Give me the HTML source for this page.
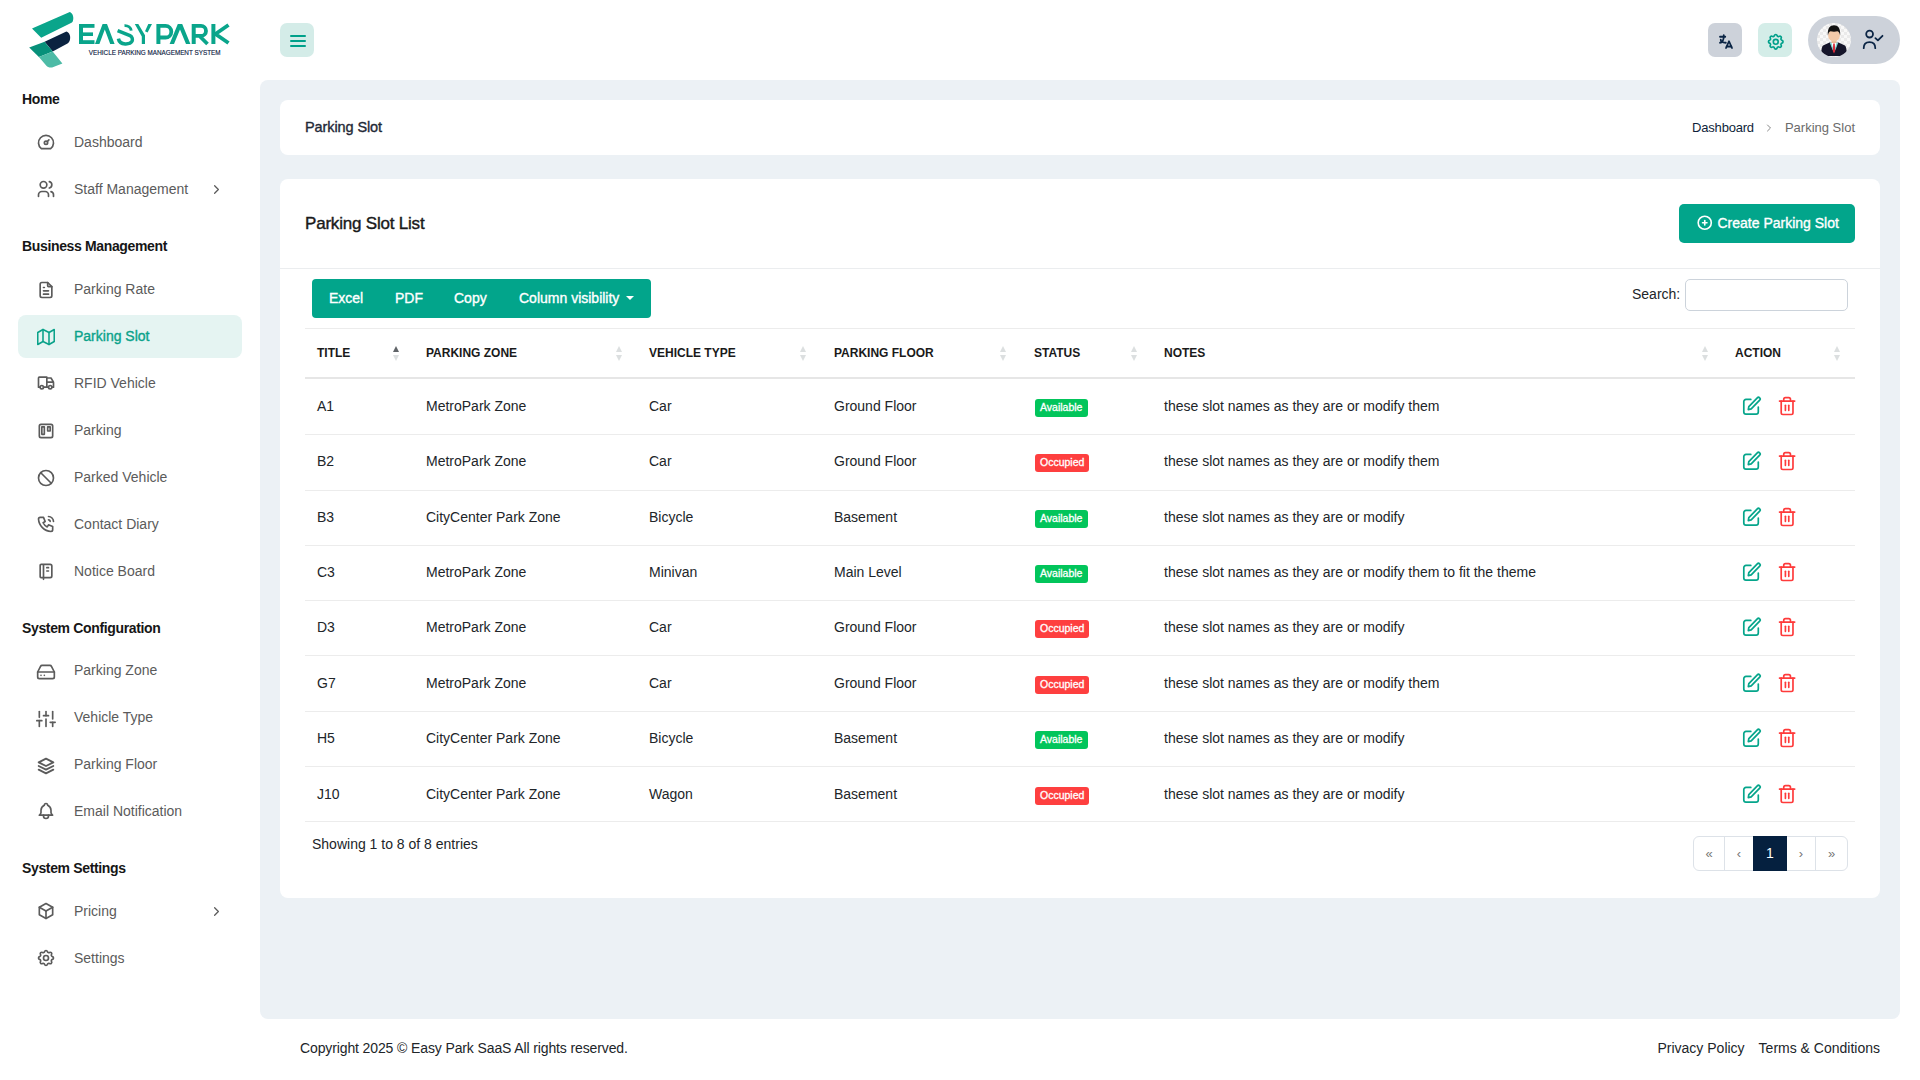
<!DOCTYPE html>
<html>
<head>
<meta charset="utf-8">
<style>
*{box-sizing:border-box;margin:0;padding:0}
html,body{width:1920px;height:1080px;overflow:hidden;background:#fff;font-family:"Liberation Sans",sans-serif;color:#212529}
.abs{position:absolute}
.sb-h{position:absolute;left:22px;font-size:14px;font-weight:bold;color:#161616;line-height:16px;letter-spacing:-0.35px}
.sb-i{position:absolute;left:18px;width:224px;height:42px;border-radius:8px;color:#5b5b5b;font-size:14px}
.sb-i .ic{position:absolute;left:18px;top:11px;width:20px;height:20px}
.sb-i .tx{position:absolute;left:56px;top:0;line-height:42px;white-space:nowrap}
.sb-i .chev{position:absolute;left:191px;top:14px;width:15px;height:15px}
.sb-i.act{background:#e5f4f2;color:#0aa28a;height:43px}
.sb-i.act .tx{-webkit-text-stroke:0.35px #0aa28a}
.main-bg{position:absolute;left:260px;top:80px;width:1640px;height:938.5px;background:#ecf1f5;border-radius:8px}
.card{position:absolute;background:#fff;border-radius:8px}
.t-bc{position:absolute;left:305px;top:117px;font-size:14.5px;line-height:20px;color:#1f2937;-webkit-text-stroke:0.35px #1f2937;letter-spacing:-0.1px}
.bc{position:absolute;right:65px;top:118px;height:20px;font-size:13px;line-height:20px;white-space:nowrap;display:flex;align-items:center}
.bc1{color:#0f1f3a;letter-spacing:-0.2px}
.bcc{margin:0 10px 0 9px}
.bc2{color:#6b6b6b}
.t-list{position:absolute;left:305px;top:213px;font-size:17px;line-height:22px;color:#1a1a1a;-webkit-text-stroke:0.4px #1a1a1a;letter-spacing:-0.2px}
.btn-create{position:absolute;left:1679px;top:204px;width:176px;height:39px;border-radius:5px;background:#02a58b;color:#fff;font-size:14px;-webkit-text-stroke:0.35px #fff;display:flex;align-items:center;padding-left:18px;white-space:nowrap}
.btn-create svg{margin-right:4px;margin-left:-1px;margin-top:-1px}
.btn-create span{margin-top:-2px}
.tools{position:absolute;left:312px;top:279px;width:339px;height:39px;border-radius:4px;background:#02a58b;color:#fff;font-size:14px;-webkit-text-stroke:0.35px #fff}
.tools span{position:absolute;top:0;line-height:38.5px;white-space:nowrap}
.tools .caret{position:absolute;left:314px;top:17px;width:0;height:0;border-left:4px solid transparent;border-right:4px solid transparent;border-top:4px solid #fff}
.search-l{position:absolute;left:1632px;top:284px;font-size:14px;line-height:20px;color:#212529}
.search-i{position:absolute;left:1685px;top:279px;width:163px;height:32px;border:1px solid #ccd3db;border-radius:5px;background:#fff}
.th{position:absolute;top:343px;font-size:12px;line-height:20px;font-weight:bold;color:#1a1a1a;white-space:nowrap}
.srt{position:absolute;top:345px;width:7px;height:16px;margin-left:0.5px}
.srt i{position:absolute;left:0;width:0;height:0;border-left:3px solid transparent;border-right:3px solid transparent}
.srt .up{top:1px;border-bottom:6px solid #dcdfe0}
.srt .dn{top:10px;border-top:6px solid #dcdfe0}
.srt.a .up{border-bottom-color:#606468}
.tr-row{position:absolute;left:0;width:1920px;height:22px;margin-top:-1px}
.td{position:absolute;top:0;line-height:22px;font-size:14px;color:#212529;white-space:nowrap}
.bdg{position:absolute;top:4px;height:18px;line-height:16.5px;border-radius:3px;color:#fff;font-size:10.5px;-webkit-text-stroke:0.3px #fff;padding:0 5px;white-space:nowrap}
.bdg.av{background:#02c55b;width:53px}
.bdg.oc{background:#fe3f3f;width:54px}
.ed{position:absolute;left:1742px;top:1.3px}
.tr{position:absolute;left:1776.8px;top:1px}
.showing{position:absolute;left:312px;top:834px;font-size:14px;line-height:20px;color:#212529}
.pag{position:absolute;left:1693px;top:836px;width:155px;height:35px;border:1px solid #dde2e8;border-radius:6px}
.pg{position:absolute;top:0;height:33px;line-height:33px;text-align:center;font-size:13px;color:#777}
.pg.act{background:#05203f;color:#fff;font-size:14px;top:-1px;height:35px;line-height:34px}
.foot-l{position:absolute;left:300px;top:1038px;font-size:14px;line-height:20px;color:#212529;letter-spacing:-0.12px}
.foot-r{position:absolute;right:40px;top:1038px;font-size:14px;line-height:20px;color:#212529;white-space:nowrap}

</style>
</head>
<body>
<svg class="abs" style="left:0;top:0" width="260" height="80" viewBox="0 0 260 80">
<path d="M32 28.5 L69.8 11.9 C72.5 13 73.8 16.5 73.2 19.5 C72.9 21.5 72.5 22.3 71.5 22.8 L41.2 37.7 Z" fill="#0aa58b"/>
<path d="M44.6 41.7 L66.4 31.4 C69.5 32.5 70.8 36 70 39.5 C69.6 41.5 69 42.5 67.5 43.4 L52.7 51.4 Z" fill="#0b2340"/>
<path d="M29.2 47.4 L44.6 41.7 L52.7 51.4 L38.9 57.1 Z" fill="#07907a"/>
<path d="M38.9 57.1 L52.7 51.4 L62.4 63.4 L52.1 67.4 C49.5 67.8 47.5 67 46.4 65.7 Z" fill="#4dbba6"/>
<g fill="#0aa58b">
<rect x="79" y="24" width="4" height="20"/><rect x="79" y="24" width="15.5" height="3.8"/><rect x="79" y="32.4" width="14" height="3.6"/><rect x="79" y="40.2" width="15.5" height="3.8"/>
<path d="M95 44 L102.6 24 L107 24 L114.6 44 L110.2 44 L104.8 29.5 L99.4 44 Z"/>
<path d="M169.6 44 L177.8 24 L182.2 24 L190.4 44 L186 44 L180 29.5 L174 44 Z"/>
<rect x="156.4" y="24" width="4" height="20"/><rect x="191.7" y="24" width="4" height="20"/><rect x="211.4" y="24" width="4" height="20"/>
</g>
<g fill="none" stroke="#0aa58b" stroke-width="3.8">
<path stroke-width="3.5" d="M117.6 30.6 L130 35.6 C132.4 36.8 132.8 39.3 132 41.3 C130.8 43.6 127.8 44 125.2 43.9 C121.2 43.7 119 42 118.4 38.6"/><path stroke-width="2.9" d="M124.5 25.6 C128 25.4 130.8 27.5 131.2 30.6"/>
<path stroke="none" fill="#0aa58b" d="M134.8 24 L138.3 24 L145 35.2 L145 44 L141.8 44 L141.8 36.6 Z M148.3 24 L152 24 L147.6 32.6 L145 31.3 Z"/>
<path d="M158 25.9 H165.5 A5.8 5.8 0 0 1 165.5 37.5 H158"/>
<path d="M193.7 25.9 H201 A5 5 0 0 1 201 35.9 H193.7 M199.5 36 L207.5 44"/>
<path d="M228.5 25 L215.5 34 L228.5 43"/>
</g>
<text x="88.8" y="54.8" font-family="Liberation Sans" font-size="7" fill="#0e2244" stroke="#0e2244" stroke-width="0.15" textLength="131.7" lengthAdjust="spacingAndGlyphs">VEHICLE PARKING MANAGEMENT SYSTEM</text>
</svg>
<div class="abs" style="left:280px;top:23px;width:34px;height:34px;border-radius:7px;background:#d4ece8"></div>
<div class="abs" style="left:289.5px;top:35px;width:16px;height:2px;border-radius:1px;background:#00a08a"></div>
<div class="abs" style="left:289.5px;top:40px;width:16px;height:2px;border-radius:1px;background:#00a08a"></div>
<div class="abs" style="left:289.5px;top:45px;width:16px;height:2px;border-radius:1px;background:#00a08a"></div>
<div class="abs" style="left:1708px;top:23px;width:34px;height:34px;border-radius:7px;background:#cdd2da"></div>
<svg class="abs" style="left:1716.5px;top:32.5px" width="18" height="18" viewBox="0 0 24 24" fill="none" stroke="#0b2545" stroke-width="2.4" stroke-linecap="round" stroke-linejoin="round"><path d="M4 5h7"/><path d="M9 3v2c0 4.418 -2.239 8 -5 8"/><path d="M5 9c0 2.144 2.952 3.908 6.7 4"/><path d="M12 20l4 -9l4 9"/><path d="M19.1 18h-6.2"/></svg>
<div class="abs" style="left:1758px;top:23px;width:34px;height:34px;border-radius:7px;background:#d4ede8"></div>
<svg class="abs" style="left:1766px;top:31.5px" width="19.5" height="19.5" viewBox="0 0 24 24" fill="none" stroke="#00a08a" stroke-width="2" stroke-linecap="round" stroke-linejoin="round"><path d="M10.325 4.317c.426 -1.756 2.924 -1.756 3.35 0a1.724 1.724 0 0 0 2.573 1.066c1.543 -.94 3.31 .826 2.37 2.37a1.724 1.724 0 0 0 1.065 2.572c1.756 .426 1.756 2.924 0 3.35a1.724 1.724 0 0 0 -1.066 2.573c.94 1.543 -.826 3.31 -2.37 2.37a1.724 1.724 0 0 0 -2.572 1.065c-.426 1.756 -2.924 1.756 -3.35 0a1.724 1.724 0 0 0 -2.573 -1.066c-1.543 .94 -3.31 -.826 -2.37 -2.37a1.724 1.724 0 0 0 -1.065 -2.572c-1.756 -.426 -1.756 -2.924 0 -3.35a1.724 1.724 0 0 0 1.066 -2.573c-.94 -1.543 .826 -3.31 2.37 -2.37c1 .608 2.296 .07 2.572 -1.065z"/><path d="M9 12a3 3 0 1 0 6 0a3 3 0 0 0 -6 0"/></svg>
<div class="abs" style="left:1808px;top:16px;width:92px;height:48px;border-radius:24px;background:#cdd2da"></div>
<svg class="abs" style="left:1817px;top:23px" width="34" height="34" viewBox="0 0 34 34">
<defs><clipPath id="av"><circle cx="17" cy="17" r="17"/></clipPath><pattern id="chk" width="6" height="6" patternUnits="userSpaceOnUse"><rect width="6" height="6" fill="#f8f8f8"/><rect width="3" height="3" fill="#eaeaea"/><rect x="3" y="3" width="3" height="3" fill="#eaeaea"/></pattern></defs>
<circle cx="17" cy="17" r="17" fill="url(#chk)"/>
<g clip-path="url(#av)">
<path d="M4.4 31 C4.2 26 4.8 23.2 6.5 22.2 L12.5 19.6 L21.5 19.6 L27.5 22.2 C29.2 23.2 29.8 26 29.6 31 C29.5 32.2 28.5 33 27 33 L7 33 C5.5 33 4.5 32.2 4.4 31 Z" fill="#15152a"/>
<path d="M13.2 19.6 L17 29 L20.8 19.6 Z" fill="#ffffff"/>
<path d="M12.8 19.8 L14.4 19.6 L16.8 28 L15.6 27 Z" fill="#7fd3d0"/>
<path d="M21.2 19.8 L19.6 19.6 L17.2 28 L18.4 27 Z" fill="#7fd3d0"/>
<path d="M16.2 20.6 L17.8 20.6 L18.2 28 L17 30.5 L15.8 28 Z" fill="#d92b3a"/>
<rect x="14.6" y="16" width="4.8" height="4" fill="#e8b995"/>
<ellipse cx="17" cy="12.6" rx="5.9" ry="6" fill="#f2c9a8"/>
<path d="M10.9 12.6 C10.2 5 13.2 2.2 17 2.2 C20.8 2.2 23.8 5 23.1 12.6 C22.6 9.6 21.8 8.6 20.5 8.2 C18.5 8.8 15.5 8.8 13.5 8.2 C12.2 8.6 11.4 9.6 10.9 12.6 Z" fill="#111"/>
</g></svg>
<svg class="abs" style="left:1860px;top:28px" width="24" height="24" viewBox="0 0 24 24" fill="none" stroke="#0b2545" stroke-width="1.8" stroke-linecap="round" stroke-linejoin="round"><circle cx="9.6" cy="6.1" r="3.4"/><path d="M3.7 20.2 C3.7 16.2 6.2 14.1 9.5 14.1 C12.8 14.1 15.3 16.2 15.3 20.2"/><path d="M15.4 10.1 L17.9 12.4 L22.5 7.8"/></svg>
<div class="sb-h" style="top:91px">Home</div>
<div class="sb-i" style="top:121px"><svg class="ic" viewBox="0 0 24 24" fill="none" stroke="currentColor" stroke-width="2" stroke-linecap="round" stroke-linejoin="round"><path d="M12 13m-2 0a2 2 0 1 0 4 0a2 2 0 1 0 -4 0"/><path d="M13.45 11.55l2.05 -2.05"/><path d="M6.4 20a9 9 0 1 1 11.2 0z"/></svg><span class="tx">Dashboard</span></div>
<div class="sb-i" style="top:168px"><svg class="ic" viewBox="0 0 24 24" fill="none" stroke="currentColor" stroke-width="2" stroke-linecap="round" stroke-linejoin="round"><path d="M9 7m-4 0a4 4 0 1 0 8 0a4 4 0 1 0 -8 0"/><path d="M3 21v-2a4 4 0 0 1 4 -4h4a4 4 0 0 1 4 4v2"/><path d="M16 3.13a4 4 0 0 1 0 7.75"/><path d="M21 21v-2a4 4 0 0 0 -3 -3.85"/></svg><span class="tx">Staff Management</span><svg class="chev" viewBox="0 0 24 24" fill="none" stroke="currentColor" stroke-width="2" stroke-linecap="round" stroke-linejoin="round"><path d="M9 6l6 6l-6 6"/></svg></div>
<div class="sb-h" style="top:238px">Business Management</div>
<div class="sb-i" style="top:268px"><svg class="ic" style="top:12px" viewBox="0 0 24 24" fill="none" stroke="currentColor" stroke-width="2" stroke-linecap="round" stroke-linejoin="round"><path d="M14 3v4a1 1 0 0 0 1 1h4"/><path d="M17 21h-10a2 2 0 0 1 -2 -2v-14a2 2 0 0 1 2 -2h7l5 5v11a2 2 0 0 1 -2 2z"/><path d="M9 9l1 0"/><path d="M9 13l6 0"/><path d="M9 17l6 0"/></svg><span class="tx">Parking Rate</span></div>
<div class="sb-i act" style="top:315px"><svg class="ic" style="top:12.5px;left:19px;width:18px;height:18px" viewBox="0 0 24 24" fill="none" stroke="currentColor" stroke-width="2.1" stroke-linecap="round" stroke-linejoin="round"><polygon points="1 6 1 22 8 18 16 22 23 18 23 2 16 6 8 2 1 6"/><line x1="8" y1="2" x2="8" y2="18"/><line x1="16" y1="6" x2="16" y2="22"/></svg><span class="tx">Parking Slot</span></div>
<div class="sb-i" style="top:362px"><svg class="ic" viewBox="0 0 24 24" fill="none" stroke="currentColor" stroke-width="2" stroke-linecap="round" stroke-linejoin="round"><path d="M7 17m-2 0a2 2 0 1 0 4 0a2 2 0 1 0 -4 0"/><path d="M17 17m-2 0a2 2 0 1 0 4 0a2 2 0 1 0 -4 0"/><path d="M5 17h-2v-11a1 1 0 0 1 1 -1h9v12m-4 0h6m4 0h2v-6h-8m0 -5h5l3 5"/></svg><span class="tx">RFID Vehicle</span></div>
<div class="sb-i" style="top:409px"><svg class="ic" style="top:12px" viewBox="0 0 24 24" fill="none" stroke="currentColor" stroke-width="2" stroke-linecap="round" stroke-linejoin="round"><path d="M4 4m0 2a2 2 0 0 1 2 -2h12a2 2 0 0 1 2 2v12a2 2 0 0 1 -2 2h-12a2 2 0 0 1 -2 -2z"/><path d="M7 7h3v9h-3z"/><path d="M14 7h3v5h-3z"/></svg><span class="tx">Parking</span></div>
<div class="sb-i" style="top:456px"><svg class="ic" style="top:12px" viewBox="0 0 24 24" fill="none" stroke="currentColor" stroke-width="2" stroke-linecap="round" stroke-linejoin="round"><path d="M12 12m-9 0a9 9 0 1 0 18 0a9 9 0 1 0 -18 0"/><path d="M5.7 5.7l12.6 12.6"/></svg><span class="tx">Parked Vehicle</span></div>
<div class="sb-i" style="top:503px"><svg class="ic" viewBox="0 0 24 24" fill="none" stroke="currentColor" stroke-width="2" stroke-linecap="round" stroke-linejoin="round"><path d="M5 4h4l2 5l-2.5 1.5a11 11 0 0 0 5 5l1.5 -2.5l5 2v4a2 2 0 0 1 -2 2a16 16 0 0 1 -15 -15a2 2 0 0 1 2 -2"/><path d="M15 7a2 2 0 0 1 2 2"/><path d="M15 3a6 6 0 0 1 6 6"/></svg><span class="tx">Contact Diary</span></div>
<div class="sb-i" style="top:550px"><svg class="ic" viewBox="0 0 24 24" fill="none" stroke="currentColor" stroke-width="2" stroke-linecap="round" stroke-linejoin="round"><path d="M6 4h11a2 2 0 0 1 2 2v12a2 2 0 0 1 -2 2h-11a1 1 0 0 1 -1 -1v-14a1 1 0 0 1 1 -1m3 0v18"/><path d="M13 8l2 0"/><path d="M13 12l2 0"/></svg><span class="tx">Notice Board</span></div>
<div class="sb-h" style="top:620px">System Configuration</div>
<div class="sb-i" style="top:649px"><svg class="ic" style="top:13px" viewBox="0 0 24 24" fill="none" stroke="currentColor" stroke-width="2" stroke-linecap="round" stroke-linejoin="round"><line x1="22" y1="12" x2="2" y2="12"/><path d="M5.45 5.110L2 12v6a2 2 0 0 0 2 2h16a2 2 0 0 0 2-2v-6l-3.45-6.89A2 2 0 0 0 16.76 4H7.24a2 2 0 0 0-1.79 1.11z"/><line x1="6" y1="16" x2="6.01" y2="16"/><line x1="10" y1="16" x2="10.01" y2="16"/></svg><span class="tx">Parking Zone</span></div>
<div class="sb-i" style="top:696px"><svg class="ic" style="top:13px" viewBox="0 0 24 24" fill="none" stroke="currentColor" stroke-width="2" stroke-linecap="round" stroke-linejoin="round"><line x1="4" y1="21" x2="4" y2="14"/><line x1="4" y1="10" x2="4" y2="3"/><line x1="12" y1="21" x2="12" y2="12"/><line x1="12" y1="8" x2="12" y2="3"/><line x1="20" y1="21" x2="20" y2="16"/><line x1="20" y1="12" x2="20" y2="3"/><line x1="1" y1="14" x2="7" y2="14"/><line x1="9" y1="8" x2="15" y2="8"/><line x1="17" y1="16" x2="23" y2="16"/></svg><span class="tx">Vehicle Type</span></div>
<div class="sb-i" style="top:743px"><svg class="ic" style="top:11.5px;left:17px;width:22px;height:22px" viewBox="0 0 24 24" fill="none" stroke="currentColor" stroke-width="2" stroke-linecap="round" stroke-linejoin="round"><path d="M12 4l-8 4l8 4l8 -4l-8 -4"/><path d="M4 12l8 4l8 -4"/><path d="M4 16l8 4l8 -4"/></svg><span class="tx">Parking Floor</span></div>
<div class="sb-i" style="top:790px"><svg class="ic" viewBox="0 0 24 24" fill="none" stroke="currentColor" stroke-width="2" stroke-linecap="round" stroke-linejoin="round"><path d="M10 5a2 2 0 1 1 4 0a7 7 0 0 1 4 6v3a4 4 0 0 0 2 3h-16a4 4 0 0 0 2 -3v-3a7 7 0 0 1 4 -6"/><path d="M9 17v1a3 3 0 0 0 6 0v-1"/></svg><span class="tx">Email Notification</span></div>
<div class="sb-h" style="top:860px">System Settings</div>
<div class="sb-i" style="top:890px"><svg class="ic" viewBox="0 0 24 24" fill="none" stroke="currentColor" stroke-width="2" stroke-linecap="round" stroke-linejoin="round"><path d="M12 3l8 4.5l0 9l-8 4.5l-8 -4.5l0 -9l8 -4.5"/><path d="M12 12l8 -4.5"/><path d="M12 12l0 9"/><path d="M12 12l-8 -4.5"/></svg><span class="tx">Pricing</span><svg class="chev" viewBox="0 0 24 24" fill="none" stroke="currentColor" stroke-width="2" stroke-linecap="round" stroke-linejoin="round"><path d="M9 6l6 6l-6 6"/></svg></div>
<div class="sb-i" style="top:937px"><svg class="ic" viewBox="0 0 24 24" fill="none" stroke="currentColor" stroke-width="2" stroke-linecap="round" stroke-linejoin="round"><path d="M10.325 4.317c.426 -1.756 2.924 -1.756 3.35 0a1.724 1.724 0 0 0 2.573 1.066c1.543 -.94 3.31 .826 2.37 2.37a1.724 1.724 0 0 0 1.065 2.572c1.756 .426 1.756 2.924 0 3.35a1.724 1.724 0 0 0 -1.066 2.573c.94 1.543 -.826 3.31 -2.37 2.37a1.724 1.724 0 0 0 -2.572 1.065c-.426 1.756 -2.924 1.756 -3.35 0a1.724 1.724 0 0 0 -2.573 -1.066c-1.543 .94 -3.31 -.826 -2.37 -2.37a1.724 1.724 0 0 0 -1.065 -2.572c-1.756 -.426 -1.756 -2.924 0 -3.35a1.724 1.724 0 0 0 1.066 -2.573c-.94 -1.543 .826 -3.31 2.37 -2.37c1 .608 2.296 .07 2.572 -1.065z"/><path d="M9 12a3 3 0 1 0 6 0a3 3 0 0 0 -6 0"/></svg><span class="tx">Settings</span></div>
<div class="main-bg"></div>
<div class="card" style="left:280px;top:100px;width:1600px;height:55px"></div>
<div class="t-bc">Parking Slot</div>
<div class="bc"><span class="bc1">Dashboard</span><svg class="bcc" width="12" height="12" viewBox="0 0 24 24" fill="none" stroke="#888" stroke-width="2" stroke-linecap="round" stroke-linejoin="round"><path d="M9 6l6 6l-6 6"/></svg><span class="bc2">Parking Slot</span></div>
<div class="card" style="left:280px;top:179px;width:1600px;height:719px"></div>
<div class="t-list">Parking Slot List</div>
<div class="btn-create"><svg width="17.5" height="17.5" viewBox="0 0 24 24" fill="none" stroke="#fff" stroke-width="2.2" stroke-linecap="round" stroke-linejoin="round"><path d="M3 12a9 9 0 1 0 18 0a9 9 0 0 0 -18 0"/><path d="M9 12h6"/><path d="M12 9v6"/></svg><span>Create Parking Slot</span></div>
<div class="abs" style="left:280px;top:268px;width:1600px;height:1px;background:#ebedef"></div>
<div class="tools"><span style="left:17px">Excel</span><span style="left:83px">PDF</span><span style="left:142px">Copy</span><span style="left:207px">Column visibility</span><i class="caret"></i></div>
<div class="search-l">Search:</div>
<div class="search-i"></div>
<div class="abs" style="left:305px;top:328px;width:1550px;height:1px;background:#ececec"></div>
<div class="th" style="left:317px">TITLE</div>
<div class="srt a" style="left:392px"><i class="up"></i><i class="dn"></i></div>
<div class="th" style="left:426px">PARKING ZONE</div>
<div class="srt " style="left:615px"><i class="up"></i><i class="dn"></i></div>
<div class="th" style="left:649px">VEHICLE TYPE</div>
<div class="srt " style="left:799px"><i class="up"></i><i class="dn"></i></div>
<div class="th" style="left:834px">PARKING FLOOR</div>
<div class="srt " style="left:999px"><i class="up"></i><i class="dn"></i></div>
<div class="th" style="left:1034px">STATUS</div>
<div class="srt " style="left:1130px"><i class="up"></i><i class="dn"></i></div>
<div class="th" style="left:1164px">NOTES</div>
<div class="srt " style="left:1701px"><i class="up"></i><i class="dn"></i></div>
<div class="th" style="left:1735px">ACTION</div>
<div class="srt " style="left:1833px"><i class="up"></i><i class="dn"></i></div>
<div class="abs" style="left:305px;top:377px;width:1550px;height:2px;background:#e6e6e6"></div>
<div class="tr-row" style="top:395.7px">
<span class="td" style="left:317px">A1</span>
<span class="td" style="left:426px">MetroPark Zone</span>
<span class="td" style="left:649px">Car</span>
<span class="td" style="left:834px">Ground Floor</span>
<span class="bdg av" style="left:1035px">Available</span>
<span class="td" style="left:1164px">these slot names as they are or modify them</span>
<svg class="ed" width="20" height="20" viewBox="0 0 20 20" fill="none" stroke="#05a58b" stroke-width="1.7" stroke-linecap="round" stroke-linejoin="round"><path d="M8.8 3.4 H4 a2.2 2.2 0 0 0 -2.2 2.2 V16 a2.2 2.2 0 0 0 2.2 2.2 H14.1 a2.2 2.2 0 0 0 2.2 -2.2 V11.1"/><path d="M6.3 13.6 L6.8 10.65 L15.3 1.85 A1.65 1.65 0 0 1 17.7 4.15 L9.2 12.95 Z"/></svg><svg class="tr" width="20.2" height="20.2" viewBox="0 0 24 24" fill="none" stroke="#fe3b3b" stroke-width="2" stroke-linecap="round" stroke-linejoin="round"><polyline points="3 6 5 6 21 6"/><path d="M19 6v14a2 2 0 0 1-2 2H7a2 2 0 0 1-2-2V6m3 0V4a2 2 0 0 1 2-2h4a2 2 0 0 1 2 2v2"/><line x1="10" y1="11" x2="10" y2="17"/><line x1="14" y1="11" x2="14" y2="17"/></svg>
</div>
<div class="abs" style="left:305px;top:434.4px;width:1550px;height:1px;background:#ececec"></div>
<div class="tr-row" style="top:450.8px">
<span class="td" style="left:317px">B2</span>
<span class="td" style="left:426px">MetroPark Zone</span>
<span class="td" style="left:649px">Car</span>
<span class="td" style="left:834px">Ground Floor</span>
<span class="bdg oc" style="left:1035px">Occupied</span>
<span class="td" style="left:1164px">these slot names as they are or modify them</span>
<svg class="ed" width="20" height="20" viewBox="0 0 20 20" fill="none" stroke="#05a58b" stroke-width="1.7" stroke-linecap="round" stroke-linejoin="round"><path d="M8.8 3.4 H4 a2.2 2.2 0 0 0 -2.2 2.2 V16 a2.2 2.2 0 0 0 2.2 2.2 H14.1 a2.2 2.2 0 0 0 2.2 -2.2 V11.1"/><path d="M6.3 13.6 L6.8 10.65 L15.3 1.85 A1.65 1.65 0 0 1 17.7 4.15 L9.2 12.95 Z"/></svg><svg class="tr" width="20.2" height="20.2" viewBox="0 0 24 24" fill="none" stroke="#fe3b3b" stroke-width="2" stroke-linecap="round" stroke-linejoin="round"><polyline points="3 6 5 6 21 6"/><path d="M19 6v14a2 2 0 0 1-2 2H7a2 2 0 0 1-2-2V6m3 0V4a2 2 0 0 1 2-2h4a2 2 0 0 1 2 2v2"/><line x1="10" y1="11" x2="10" y2="17"/><line x1="14" y1="11" x2="14" y2="17"/></svg>
</div>
<div class="abs" style="left:305px;top:489.6px;width:1550px;height:1px;background:#ececec"></div>
<div class="tr-row" style="top:506.8px">
<span class="td" style="left:317px">B3</span>
<span class="td" style="left:426px">CityCenter Park Zone</span>
<span class="td" style="left:649px">Bicycle</span>
<span class="td" style="left:834px">Basement</span>
<span class="bdg av" style="left:1035px">Available</span>
<span class="td" style="left:1164px">these slot names as they are or modify</span>
<svg class="ed" width="20" height="20" viewBox="0 0 20 20" fill="none" stroke="#05a58b" stroke-width="1.7" stroke-linecap="round" stroke-linejoin="round"><path d="M8.8 3.4 H4 a2.2 2.2 0 0 0 -2.2 2.2 V16 a2.2 2.2 0 0 0 2.2 2.2 H14.1 a2.2 2.2 0 0 0 2.2 -2.2 V11.1"/><path d="M6.3 13.6 L6.8 10.65 L15.3 1.85 A1.65 1.65 0 0 1 17.7 4.15 L9.2 12.95 Z"/></svg><svg class="tr" width="20.2" height="20.2" viewBox="0 0 24 24" fill="none" stroke="#fe3b3b" stroke-width="2" stroke-linecap="round" stroke-linejoin="round"><polyline points="3 6 5 6 21 6"/><path d="M19 6v14a2 2 0 0 1-2 2H7a2 2 0 0 1-2-2V6m3 0V4a2 2 0 0 1 2-2h4a2 2 0 0 1 2 2v2"/><line x1="10" y1="11" x2="10" y2="17"/><line x1="14" y1="11" x2="14" y2="17"/></svg>
</div>
<div class="abs" style="left:305px;top:544.9px;width:1550px;height:1px;background:#ececec"></div>
<div class="tr-row" style="top:562.0px">
<span class="td" style="left:317px">C3</span>
<span class="td" style="left:426px">MetroPark Zone</span>
<span class="td" style="left:649px">Minivan</span>
<span class="td" style="left:834px">Main Level</span>
<span class="bdg av" style="left:1035px">Available</span>
<span class="td" style="left:1164px">these slot names as they are or modify them to fit the theme</span>
<svg class="ed" width="20" height="20" viewBox="0 0 20 20" fill="none" stroke="#05a58b" stroke-width="1.7" stroke-linecap="round" stroke-linejoin="round"><path d="M8.8 3.4 H4 a2.2 2.2 0 0 0 -2.2 2.2 V16 a2.2 2.2 0 0 0 2.2 2.2 H14.1 a2.2 2.2 0 0 0 2.2 -2.2 V11.1"/><path d="M6.3 13.6 L6.8 10.65 L15.3 1.85 A1.65 1.65 0 0 1 17.7 4.15 L9.2 12.95 Z"/></svg><svg class="tr" width="20.2" height="20.2" viewBox="0 0 24 24" fill="none" stroke="#fe3b3b" stroke-width="2" stroke-linecap="round" stroke-linejoin="round"><polyline points="3 6 5 6 21 6"/><path d="M19 6v14a2 2 0 0 1-2 2H7a2 2 0 0 1-2-2V6m3 0V4a2 2 0 0 1 2-2h4a2 2 0 0 1 2 2v2"/><line x1="10" y1="11" x2="10" y2="17"/><line x1="14" y1="11" x2="14" y2="17"/></svg>
</div>
<div class="abs" style="left:305px;top:600.1px;width:1550px;height:1px;background:#ececec"></div>
<div class="tr-row" style="top:617.2px">
<span class="td" style="left:317px">D3</span>
<span class="td" style="left:426px">MetroPark Zone</span>
<span class="td" style="left:649px">Car</span>
<span class="td" style="left:834px">Ground Floor</span>
<span class="bdg oc" style="left:1035px">Occupied</span>
<span class="td" style="left:1164px">these slot names as they are or modify</span>
<svg class="ed" width="20" height="20" viewBox="0 0 20 20" fill="none" stroke="#05a58b" stroke-width="1.7" stroke-linecap="round" stroke-linejoin="round"><path d="M8.8 3.4 H4 a2.2 2.2 0 0 0 -2.2 2.2 V16 a2.2 2.2 0 0 0 2.2 2.2 H14.1 a2.2 2.2 0 0 0 2.2 -2.2 V11.1"/><path d="M6.3 13.6 L6.8 10.65 L15.3 1.85 A1.65 1.65 0 0 1 17.7 4.15 L9.2 12.95 Z"/></svg><svg class="tr" width="20.2" height="20.2" viewBox="0 0 24 24" fill="none" stroke="#fe3b3b" stroke-width="2" stroke-linecap="round" stroke-linejoin="round"><polyline points="3 6 5 6 21 6"/><path d="M19 6v14a2 2 0 0 1-2 2H7a2 2 0 0 1-2-2V6m3 0V4a2 2 0 0 1 2-2h4a2 2 0 0 1 2 2v2"/><line x1="10" y1="11" x2="10" y2="17"/><line x1="14" y1="11" x2="14" y2="17"/></svg>
</div>
<div class="abs" style="left:305px;top:655.4px;width:1550px;height:1px;background:#ececec"></div>
<div class="tr-row" style="top:672.5px">
<span class="td" style="left:317px">G7</span>
<span class="td" style="left:426px">MetroPark Zone</span>
<span class="td" style="left:649px">Car</span>
<span class="td" style="left:834px">Ground Floor</span>
<span class="bdg oc" style="left:1035px">Occupied</span>
<span class="td" style="left:1164px">these slot names as they are or modify them</span>
<svg class="ed" width="20" height="20" viewBox="0 0 20 20" fill="none" stroke="#05a58b" stroke-width="1.7" stroke-linecap="round" stroke-linejoin="round"><path d="M8.8 3.4 H4 a2.2 2.2 0 0 0 -2.2 2.2 V16 a2.2 2.2 0 0 0 2.2 2.2 H14.1 a2.2 2.2 0 0 0 2.2 -2.2 V11.1"/><path d="M6.3 13.6 L6.8 10.65 L15.3 1.85 A1.65 1.65 0 0 1 17.7 4.15 L9.2 12.95 Z"/></svg><svg class="tr" width="20.2" height="20.2" viewBox="0 0 24 24" fill="none" stroke="#fe3b3b" stroke-width="2" stroke-linecap="round" stroke-linejoin="round"><polyline points="3 6 5 6 21 6"/><path d="M19 6v14a2 2 0 0 1-2 2H7a2 2 0 0 1-2-2V6m3 0V4a2 2 0 0 1 2-2h4a2 2 0 0 1 2 2v2"/><line x1="10" y1="11" x2="10" y2="17"/><line x1="14" y1="11" x2="14" y2="17"/></svg>
</div>
<div class="abs" style="left:305px;top:710.6px;width:1550px;height:1px;background:#ececec"></div>
<div class="tr-row" style="top:727.7px">
<span class="td" style="left:317px">H5</span>
<span class="td" style="left:426px">CityCenter Park Zone</span>
<span class="td" style="left:649px">Bicycle</span>
<span class="td" style="left:834px">Basement</span>
<span class="bdg av" style="left:1035px">Available</span>
<span class="td" style="left:1164px">these slot names as they are or modify</span>
<svg class="ed" width="20" height="20" viewBox="0 0 20 20" fill="none" stroke="#05a58b" stroke-width="1.7" stroke-linecap="round" stroke-linejoin="round"><path d="M8.8 3.4 H4 a2.2 2.2 0 0 0 -2.2 2.2 V16 a2.2 2.2 0 0 0 2.2 2.2 H14.1 a2.2 2.2 0 0 0 2.2 -2.2 V11.1"/><path d="M6.3 13.6 L6.8 10.65 L15.3 1.85 A1.65 1.65 0 0 1 17.7 4.15 L9.2 12.95 Z"/></svg><svg class="tr" width="20.2" height="20.2" viewBox="0 0 24 24" fill="none" stroke="#fe3b3b" stroke-width="2" stroke-linecap="round" stroke-linejoin="round"><polyline points="3 6 5 6 21 6"/><path d="M19 6v14a2 2 0 0 1-2 2H7a2 2 0 0 1-2-2V6m3 0V4a2 2 0 0 1 2-2h4a2 2 0 0 1 2 2v2"/><line x1="10" y1="11" x2="10" y2="17"/><line x1="14" y1="11" x2="14" y2="17"/></svg>
</div>
<div class="abs" style="left:305px;top:765.8px;width:1550px;height:1px;background:#ececec"></div>
<div class="tr-row" style="top:784.0px">
<span class="td" style="left:317px">J10</span>
<span class="td" style="left:426px">CityCenter Park Zone</span>
<span class="td" style="left:649px">Wagon</span>
<span class="td" style="left:834px">Basement</span>
<span class="bdg oc" style="left:1035px">Occupied</span>
<span class="td" style="left:1164px">these slot names as they are or modify</span>
<svg class="ed" width="20" height="20" viewBox="0 0 20 20" fill="none" stroke="#05a58b" stroke-width="1.7" stroke-linecap="round" stroke-linejoin="round"><path d="M8.8 3.4 H4 a2.2 2.2 0 0 0 -2.2 2.2 V16 a2.2 2.2 0 0 0 2.2 2.2 H14.1 a2.2 2.2 0 0 0 2.2 -2.2 V11.1"/><path d="M6.3 13.6 L6.8 10.65 L15.3 1.85 A1.65 1.65 0 0 1 17.7 4.15 L9.2 12.95 Z"/></svg><svg class="tr" width="20.2" height="20.2" viewBox="0 0 24 24" fill="none" stroke="#fe3b3b" stroke-width="2" stroke-linecap="round" stroke-linejoin="round"><polyline points="3 6 5 6 21 6"/><path d="M19 6v14a2 2 0 0 1-2 2H7a2 2 0 0 1-2-2V6m3 0V4a2 2 0 0 1 2-2h4a2 2 0 0 1 2 2v2"/><line x1="10" y1="11" x2="10" y2="17"/><line x1="14" y1="11" x2="14" y2="17"/></svg>
</div>
<div class="abs" style="left:305px;top:821.1px;width:1550px;height:1px;background:#ececec"></div>
<div class="showing">Showing 1 to 8 of 8 entries</div>
<div class="pag">
<div class="pg" style="left:0;width:30px">&laquo;</div>
<div class="pg" style="left:30px;width:29px;border-left:1px solid #dde2e8">&lsaquo;</div>
<div class="pg act" style="left:59px;width:34px">1</div>
<div class="pg" style="left:93px;width:28px">&rsaquo;</div>
<div class="pg" style="left:121px;width:32px;border-left:1px solid #dde2e8">&raquo;</div>
</div>
<div class="foot-l">Copyright 2025 &copy; Easy Park SaaS All rights reserved.</div>
<div class="foot-r"><span>Privacy Policy</span><span style="margin-left:14px">Terms &amp; Conditions</span></div>
</body>
</html>
